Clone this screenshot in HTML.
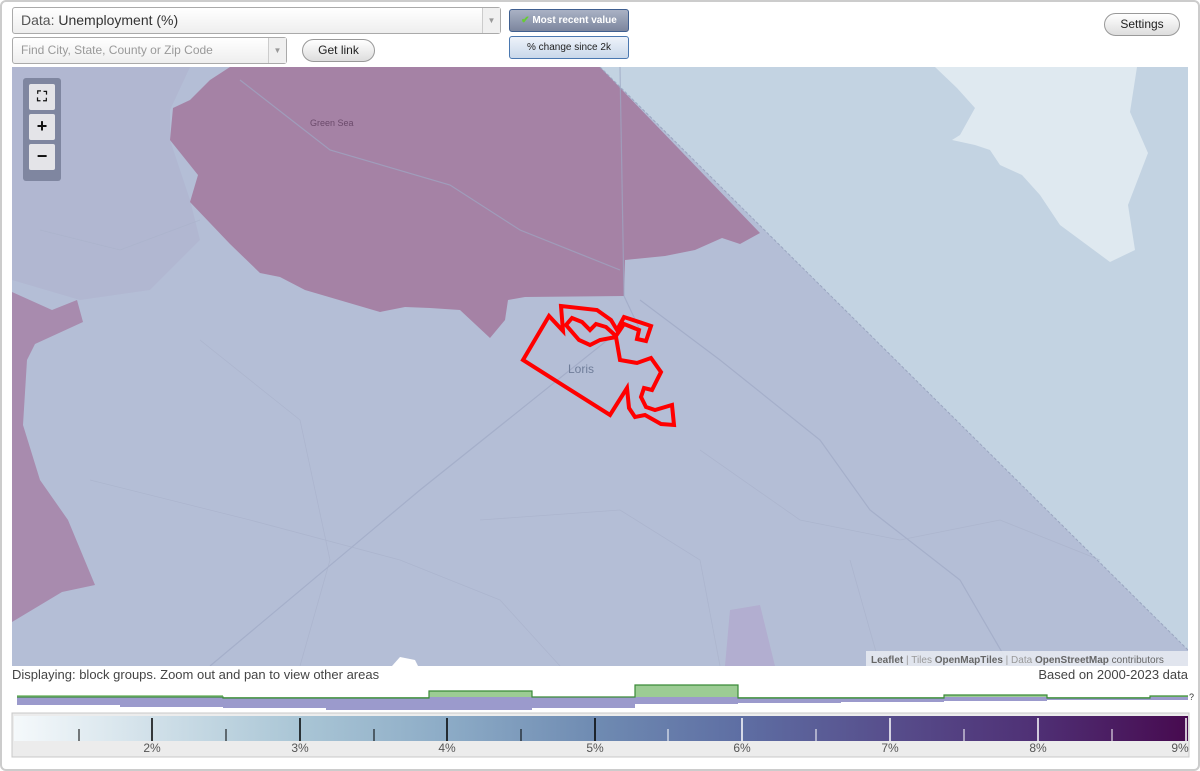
<!DOCTYPE html>
<html><head><meta charset="utf-8"><style>
*{box-sizing:border-box;margin:0;padding:0}
body{width:1200px;height:771px;background:#fff;font-family:"Liberation Sans",sans-serif;position:relative;overflow:hidden}
.frame{position:absolute;left:0;top:0;width:1200px;height:771px;border:2px solid #ccc;border-radius:6px}
.sel{position:absolute;border:1px solid #aaa;border-radius:3px;background:linear-gradient(#fff,#eee);font-size:14px;color:#333}
.arr{position:absolute;right:0;top:0;bottom:0;width:18px;border-left:1px solid #ccc;background:#f0f0f0;color:#999;font-size:8px;text-align:center}
.btn{position:absolute;border:1px solid #999;border-radius:12px;background:linear-gradient(#fff,#ddd);font-size:12px;color:#222;text-align:center}
.tb{position:absolute;left:509px;width:120px;height:23px;border:1px solid #4a78b0;border-radius:3px;font-size:10px;text-align:center;line-height:21px}
.zc{position:absolute;left:23px;top:78px;width:38px;height:103px;background:#7f86a0;border-radius:3px}
.zb{position:absolute;left:6px;width:26px;height:26px;background:#e4e4e8;border-radius:2px;font-weight:bold;font-size:18px;text-align:center;line-height:25px;color:#111}
</style></head><body>
<div class="frame"></div>
<div class="sel" style="left:12px;top:7px;width:489px;height:27px;line-height:25px;padding-left:8px;font-size:14px"><span style="color:#555">Data:</span> Unemployment (%)<div class="arr" style="line-height:25px">▼</div></div>
<div class="sel" style="left:12px;top:37px;width:275px;height:27px;line-height:25px;padding-left:8px;font-size:12px;color:#999">Find City, State, County or Zip Code<div class="arr" style="line-height:25px">▼</div></div>
<div class="btn" style="left:302px;top:39px;width:73px;height:23px;line-height:21px">Get link</div>
<div class="tb" style="top:9px;background:linear-gradient(#a9b1c4,#7c869e);color:#fff;font-weight:bold;border-color:#3f5f90"><span style="color:#6c3">✔</span> Most recent value</div>
<div class="tb" style="top:36px;background:linear-gradient(#eef3fa,#c9d8ea);color:#222">% change since 2k</div>
<div class="btn" style="left:1104px;top:13px;width:76px;height:23px;line-height:21px">Settings</div>

<svg style="position:absolute;left:0;top:0" width="1200" height="771">
<defs><clipPath id="m"><rect x="12" y="67" width="1176" height="599"/></clipPath>
<linearGradient id="lg" x1="0" x2="1"><stop offset="0" stop-color="#f5f9fb"/><stop offset=".245" stop-color="#a9c5d5"/><stop offset=".37" stop-color="#8cabc6"/><stop offset=".495" stop-color="#6f8bb2"/><stop offset=".62" stop-color="#5e6ea3"/><stop offset=".745" stop-color="#574e8c"/><stop offset=".87" stop-color="#4f3075"/><stop offset="1" stop-color="#470a4f"/></linearGradient></defs>
<g clip-path="url(#m)">
<rect x="12" y="67" width="1176" height="599" fill="#b4bed6"/>
<polygon points="12,67 190,67 170,110 170,140 190,200 200,240 150,290 80,300 12,280" fill="#b1b7d1"/>
<polygon points="600,67 1188,67 1188,650" fill="#c3d3e2"/>
<polygon points="935,67 1137,67 1130,112 1148,153 1128,205 1135,250 1110,262 1060,225 1040,195 1022,175 1000,165 990,150 975,145 952,140 960,135 975,108 957,88" fill="#dfe9f0"/>
<polygon points="230,67 600,67 760,233 740,244 722,238 695,250 665,256 625,260 624,296 525,297 508,300 505,320 490,338 460,310 430,308 405,307 380,312 305,290 280,277 260,273 230,244 190,202 198,175 170,140 173,108 190,100 210,80" fill="#a582a5"/>
<polygon points="12,292 52,310 77,300 83,322 35,344 27,360 23,425 40,480 68,520 95,585 62,592 12,622" fill="#a88bae"/>
<polygon points="730,610 760,605 775,666 725,666" fill="#b2aed0"/>
<polygon points="392,666 400,657 415,660 418,666" fill="#fff"/>
<g fill="none" stroke="#9ea8c4" stroke-width="1.2" opacity=".7">
<path d="M210,666 L420,490 L620,330"/>
<path d="M620,67 L624,296 L640,330"/>
<path d="M240,80 L330,150 L450,185 L520,230 L620,270"/>
<path d="M640,300 L720,360 L820,440 L870,510 L960,580 L1010,666"/>
</g>
<g fill="none" stroke="#a9b2cb" stroke-width="0.8" opacity=".7">
<path d="M90,480 L250,520 L400,560 L500,600 L560,666"/>
<path d="M200,340 L300,420 L330,560 L300,666"/>
<path d="M700,450 L800,520 L900,540 L1000,520 L1100,560"/>
<path d="M480,520 L620,510 L700,560 L720,666"/>
<path d="M850,560 L880,666"/>
<path d="M40,230 L120,250 L200,220"/>
</g>
<line x1="600" y1="67" x2="1188" y2="650" stroke="#9aa6c0" stroke-width="1" stroke-dasharray="3,2"/>
<polygon points="523,360 549,316 563,331 561,306 597,310 611,320 617,330 624,317 651,326 646,341 637,339 639,330 624,324 616,336 606,327 596,324 590,330 582,322 572,318 566,325 579,340 590,345 600,340 616,337 620,360 637,363 651,358 661,372 652,390 644,388 641,397 646,407 655,410 672,405 674,425 661,424 645,415 635,417 629,408 627,388 610,415" fill="none" stroke="#f00" stroke-width="4" stroke-linejoin="miter"/>
<text x="568" y="373" font-size="12" fill="#6f7d99" font-family="Liberation Sans">Loris</text>
<text x="310" y="126" font-size="9" fill="#6b4a6b" font-family="Liberation Sans">Green Sea</text>
</g>
<rect x="866" y="651" width="322" height="15" fill="#e9ecf2" opacity=".85"/>
<text x="871" y="663" font-size="10" fill="#999" font-family="Liberation Sans"><tspan fill="#666" font-weight="bold">Leaflet</tspan> | Tiles <tspan fill="#666" font-weight="bold">OpenMapTiles</tspan> | Data <tspan fill="#666" font-weight="bold">OpenStreetMap</tspan> <tspan fill="#666">contributors</tspan></text>
<g>
<path d="M17,697 V705 H120 V707 H223 V708 H326 V710 H429 V710 H532 V708 H635 V704 H738 V703 H841 V702 H944 V701 H1047 V700 H1150 V700 H1188 V697 Z" fill="#9b9acc"/>
<path d="M17,697 V695 H120 V695 H223 V698 H326 V698 H429 V691 H532 V697 H635 V685 H738 V698 H841 V698 H944 V695 H1047 V698 H1150 V696 H1188 V697 Z" fill="#9ccc94"/>
<path d="M17,697 H223 V698 H429 V691 H532 V697 H635 V685 H738 V698 H944 V695 H1047 V698 H1150 V696 H1188" fill="none" stroke="#3a8a38" stroke-width="1.2"/>
<text x="1189" y="700" font-size="9" fill="#333">?</text>
</g>
<rect x="12" y="713" width="1177" height="44" fill="#ececec" stroke="#c8c8c8"/>
<rect x="14" y="716" width="1174" height="25" fill="url(#lg)"/>
<g stroke="#000" stroke-width="1.5">
<line x1="152" y1="718" x2="152" y2="741"/><line x1="300" y1="718" x2="300" y2="741"/><line x1="447" y1="718" x2="447" y2="741"/><line x1="595" y1="718" x2="595" y2="741"/>
<line x1="79" y1="729" x2="79" y2="741" stroke-width="1"/><line x1="226" y1="729" x2="226" y2="741" stroke-width="1"/><line x1="374" y1="729" x2="374" y2="741" stroke-width="1"/><line x1="521" y1="729" x2="521" y2="741" stroke-width="1"/></g>
<g stroke="#fff" stroke-width="1.5">
<line x1="742" y1="718" x2="742" y2="741"/><line x1="890" y1="718" x2="890" y2="741"/><line x1="1038" y1="718" x2="1038" y2="741"/><line x1="1186" y1="718" x2="1186" y2="741"/>
<line x1="668" y1="729" x2="668" y2="741" stroke-width="1"/><line x1="816" y1="729" x2="816" y2="741" stroke-width="1"/><line x1="964" y1="729" x2="964" y2="741" stroke-width="1"/><line x1="1112" y1="729" x2="1112" y2="741" stroke-width="1"/></g>
<g font-size="12" fill="#555" text-anchor="middle" font-family="Liberation Sans">
<text x="152" y="752">2%</text><text x="300" y="752">3%</text><text x="447" y="752">4%</text><text x="595" y="752">5%</text><text x="742" y="752">6%</text><text x="890" y="752">7%</text><text x="1038" y="752">8%</text><text x="1180" y="752">9%</text></g>
</svg>
<div style="position:absolute;left:12px;top:667px;font-size:13px;color:#444">Displaying: block groups. Zoom out and pan to view other areas</div>
<div style="position:absolute;right:12px;top:667px;font-size:13px;color:#444">Based on 2000-2023 data</div>
<div class="zc">
<div class="zb" style="top:6px;font-size:14px">⛶</div>
<div class="zb" style="top:36px">+</div>
<div class="zb" style="top:66px">−</div>
</div>
</body></html>
